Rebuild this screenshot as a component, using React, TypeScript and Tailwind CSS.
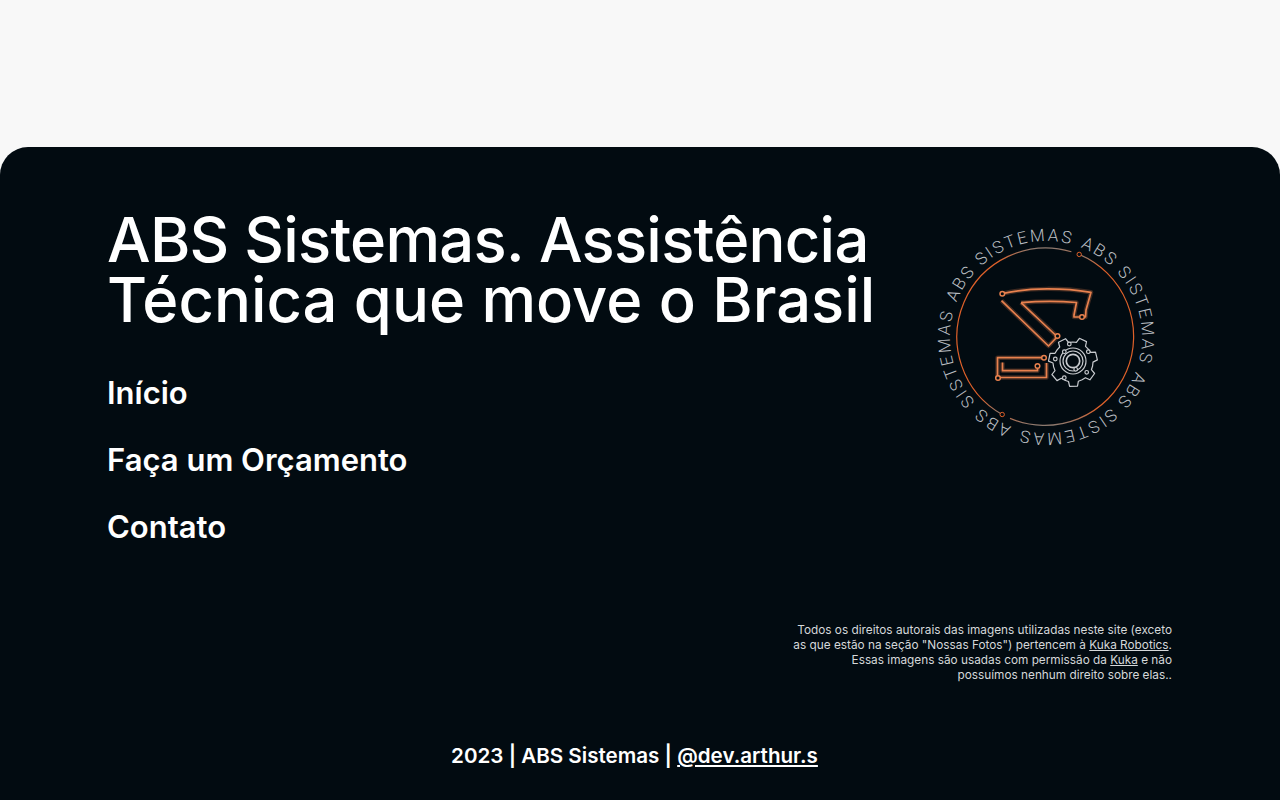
const traces = [
  "M72.3 78.7 C100 72 135 73 161 77.3 L156 95 L155.5 102 L152 102",
  "M91 87.7 C110 86 128 86 146.5 87.5 L144 100 L144 102 L152 102",
  "M91 87.7 L126.5 121",
  "M71.5 85.7 L118.5 131 L127 122",
  "M114 142.7 L67.5 142.7 L67.5 162.5 L116.5 162.5 L116.5 148",
  "M107.5 151 L107.5 155.7 L72.5 155.7 L72.5 147.5",
];

const nodes = [
  [72.3, 78.7],
  [152, 102],
  [127.5, 121],
  [114, 142.7],
  [107.5, 151],
  [68, 163],
];

const gearNodes = [
  [139.3, 129],
  [134.3, 136.7],
  [125.3, 144],
  [158.3, 136.7],
  [156.7, 157.3],
  [145.7, 154.3],
  [134.3, 162.7],
];

function gearPath(cx: number, cy: number, inner: number, outer: number, teeth: number) {
  const pts: string[] = [];
  for (let i = 0; i < teeth; i++) {
    const step = (Math.PI * 2) / teeth;
    const a = i * step + 0.2;
    const list: [number, number][] = [
      [inner, a],
      [inner, a + step * 0.22],
      [outer, a + step * 0.32],
      [outer, a + step * 0.68],
      [inner, a + step * 0.78],
    ];
    list.forEach(([r, t]) => {
      pts.push(`${(cx + r * Math.cos(t)).toFixed(1)} ${(cy + r * Math.sin(t)).toFixed(1)}`);
    });
  }
  return "M" + pts.join(" L") + " Z";
}

function Logo() {
  return (
    <svg viewBox="0 0 240 240" className="w-[240px] h-[240px] shrink-0 mt-[5px] mr-[2px]">
      <defs>
        <path id="ring" d="M116 26 A96 96 0 1 1 115.99 26" fill="none" />
        <linearGradient id="ringColor" x1="0" y1="0" x2="0" y2="1">
          <stop offset="0" stopColor="#8c7a70" />
          <stop offset="0.08" stopColor="#de6029" />
          <stop offset="0.9" stopColor="#de6029" />
          <stop offset="1" stopColor="#8c7a70" />
        </linearGradient>
      </defs>

      {[21, 111, 201, 291].map((deg) => (
        <text
          key={deg}
          transform={`rotate(${deg} 116 122)`}
          fill="#b8bcc0"
          fontSize="17"
          fontWeight="300"
          fontFamily="Roboto, sans-serif"
        >
          <textPath href="#ring" textLength="140" lengthAdjust="spacing">
            ABS SISTEMAS
          </textPath>
        </text>
      ))}

      <path d="M149.2 39.4 A89 89 0 1 1 80 203.4" fill="none" stroke="url(#ringColor)" strokeWidth="1.2" />
      <path d="M72.2 199.5 A89 89 0 0 1 141.4 36.7" fill="none" stroke="url(#ringColor)" strokeWidth="1.2" />
      <circle cx="149.2" cy="39.4" r="2.2" fill="#020b11" stroke="#de6029" strokeWidth="1" />
      <circle cx="72.2" cy="199.5" r="2.2" fill="#020b11" stroke="#de6029" strokeWidth="1" />

      <g fill="none" stroke="#e8814e" strokeLinejoin="round">
        {traces.map((d) => (
          <path key={d} d={d} strokeWidth="4.5" opacity="0.25" />
        ))}
        {traces.map((d) => (
          <path key={d} d={d} strokeWidth="1.7" />
        ))}
        {nodes.map(([x, y]) => (
          <circle key={x} cx={x} cy={y} r="2.3" fill="#020b11" strokeWidth="1.5" />
        ))}
      </g>

      <g fill="none" stroke="#c8cbcf" strokeWidth="1.2" strokeLinejoin="round">
        <path d={gearPath(143, 147, 20, 24.5, 7)} />
        <circle cx="143" cy="146" r="13" />
        <circle cx="143" cy="146" r="10" />
        <circle cx="143" cy="146" r="6.7" strokeWidth="1.7" />
        {gearNodes.map(([x, y]) => (
          <circle key={x} cx={x} cy={y} r="1.8" fill="#020b11" />
        ))}
      </g>
    </svg>
  );
}

export default function App() {
  return (
    <div className="min-h-screen bg-[#f8f8f8] pt-[147px] font-['Inter',sans-serif]">
      <footer className="h-[653px] rounded-t-[28px] bg-[#020b11] pl-[107px] pr-[108px] pt-[63px] text-white flex flex-col">
        <div className="flex justify-between items-start">
          <div>
            <h1 className="text-[61.5px] leading-[60px] font-medium whitespace-nowrap">
              <span className="tracking-[-0.72px]">ABS Sistemas. Assistência</span>
              <br />
              Técnica que move o Brasil
            </h1>
            <nav className="mt-[45px] flex flex-col gap-[31px] text-[31px] leading-9 font-semibold">
              <a href="#">Início</a>
              <a href="#">Faça um Orçamento</a>
              <a href="#">Contato</a>
            </nav>
          </div>
          <Logo />
        </div>

        <p className="mt-[78px] text-right text-[11.8px] leading-[15px] text-[#d5d8da]">
          Todos os direitos autorais das imagens utilizadas neste site (exceto
          <br />
          as que estão na seção "Nossas Fotos") pertencem à <a href="#" className="underline">Kuka Robotics</a>.
          <br />
          Essas imagens são usadas com permissão da <a href="#" className="underline">Kuka</a> e não
          <br />
          possuímos nenhum direito sobre elas..
        </p>

        <p className="mt-[59px] pr-[10px] text-center text-[20.6px] leading-7 font-semibold">
          2023 | ABS Sistemas | <a href="#" className="underline">@dev.arthur.s</a>
        </p>
      </footer>
    </div>
  );
}
